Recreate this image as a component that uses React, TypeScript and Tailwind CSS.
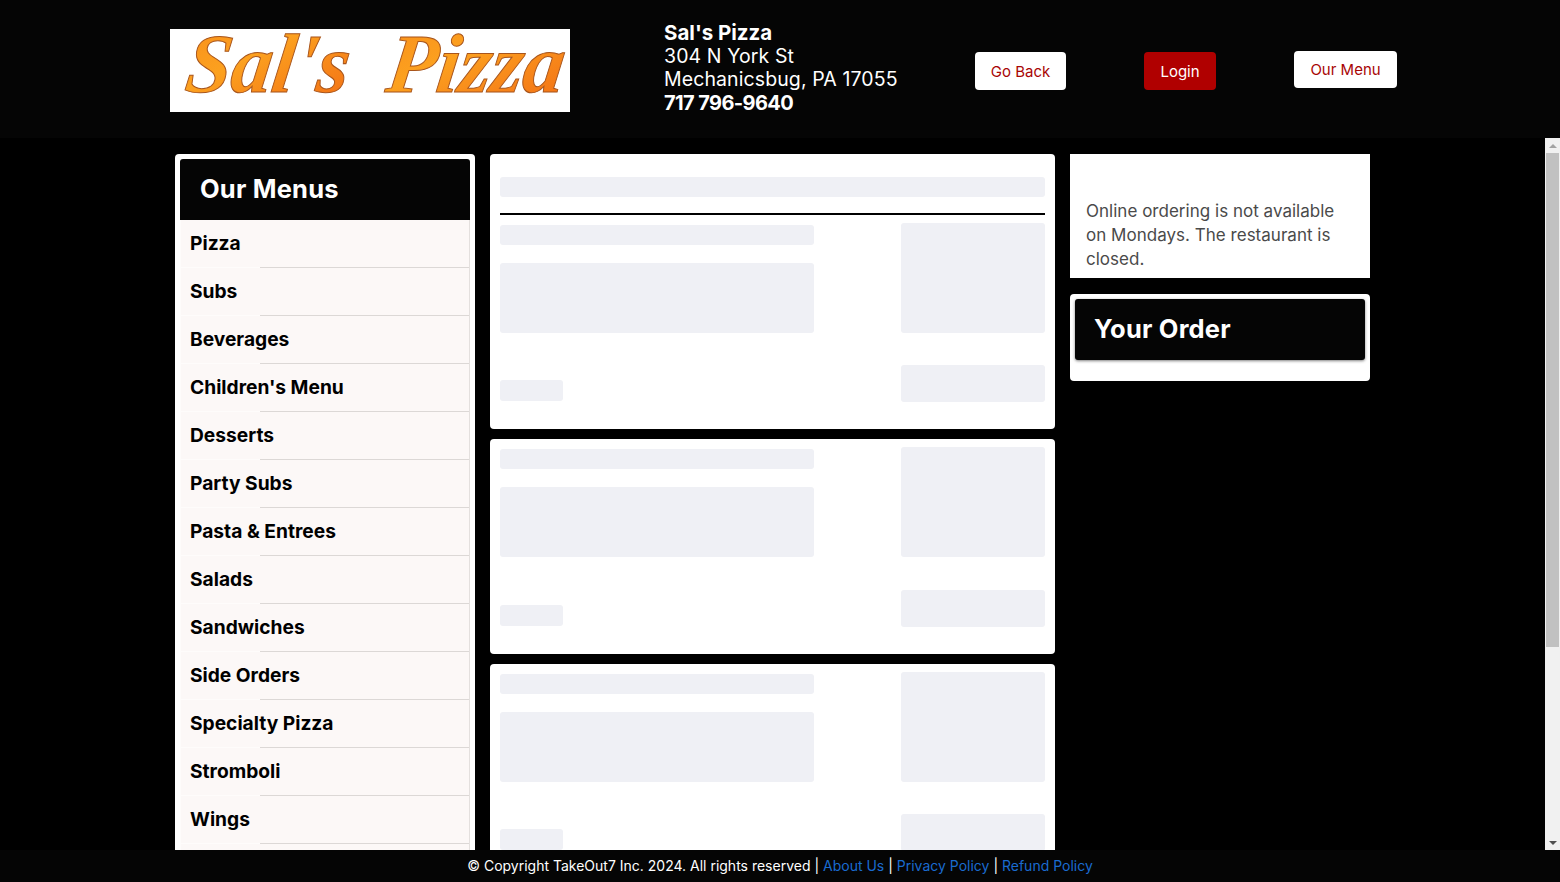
import React from 'react';

const menus = [
  'Pizza',
  'Subs',
  'Beverages',
  "Children's Menu",
  'Desserts',
  'Party Subs',
  'Pasta & Entrees',
  'Salads',
  'Sandwiches',
  'Side Orders',
  'Specialty Pizza',
  'Stromboli',
  'Wings',
];

const Logo = () => (
  <svg viewBox="0 0 400 83" className="block w-[400px] h-[83px] bg-white">
    <defs>
      <linearGradient id="logoFill" x1="0" y1="0" x2="1" y2="1">
        <stop offset="0" stopColor="#f98f1c" />
        <stop offset="0.4" stopColor="#fca11f" />
        <stop offset="0.7" stopColor="#f7861a" />
        <stop offset="1" stopColor="#f26f14" />
      </linearGradient>
    </defs>
    <g transform="skewX(-8)">
      <text
        x="22"
        y="63"
        textLength="163"
        lengthAdjust="spacingAndGlyphs"
        fontFamily="'Liberation Serif', serif"
        fontStyle="italic"
        fontWeight="700"
        fontSize="84"
        fill="url(#logoFill)"
        stroke="#a8551c"
        strokeWidth="1"
      >
        Sal's
      </text>
      <text
        x="223"
        y="63"
        textLength="177"
        lengthAdjust="spacingAndGlyphs"
        fontFamily="'Liberation Serif', serif"
        fontStyle="italic"
        fontWeight="700"
        fontSize="84"
        fill="url(#logoFill)"
        stroke="#a8551c"
        strokeWidth="1"
      >
        Pizza
      </text>
    </g>
  </svg>
);

const Bone = ({ className }: { className: string }) => (
  <div className={`bg-[#eff0f5] rounded-[3px] ${className}`} />
);

const SkeletonCard = ({ first, roomy }: { first?: boolean; roomy?: boolean }) => (
  <div className="bg-white rounded-[4px] px-[10px] pt-[8px] pb-[27px]">
    {first && (
      <div className="pt-[15px] mb-[8px]">
        <Bone className="h-[20px] w-full" />
        <div className="h-[2px] bg-black mt-[16px]" />
      </div>
    )}
    <div className="flex justify-between">
      <div className="w-[314px] pt-[2px]">
        <Bone className="h-[20px]" />
        <Bone className="h-[70px] mt-[18px]" />
        <Bone className={`h-[21px] w-[63px] ${roomy ? 'mt-[48px]' : 'mt-[47px]'}`} />
      </div>
      <div className="w-[144px]">
        <Bone className="h-[110px]" />
        <Bone className={`h-[37px] ${roomy ? 'mt-[33px]' : 'mt-[32px]'}`} />
      </div>
    </div>
  </div>
);

// the page's scrollbar, as it stood when the page was photographed
const ScrollBar = () => (
  <div className="absolute top-0 right-0 bottom-0 w-[15px] bg-[#f1f1f1] flex flex-col items-center">
    <div className="h-[15px] w-full shrink-0 flex items-center justify-center">
      <div className="w-0 h-0 border-x-[4px] border-x-transparent border-b-[4px] border-b-[#a3a3a3]" />
    </div>
    <div className="h-[494px] w-[13px] bg-[#c1c1c1]" />
    <div className="mt-auto h-[15px] w-full shrink-0 flex items-center justify-center">
      <div className="w-0 h-0 border-x-[4px] border-x-transparent border-t-[4px] border-t-[#505050]" />
    </div>
  </div>
);

export default function App() {
  return (
    <div className="h-[882px] overflow-hidden bg-black flex flex-col font-['Inter','Liberation_Sans',sans-serif]">
      <header className="h-[138px] shrink-0 bg-[#050505] flex items-start pl-[170px] text-white">
        <div className="mt-[29px]">
          <Logo />
        </div>
        <div className="ml-[94px] mt-[21px] w-[311px] text-[19.5px] leading-[23.5px] tracking-[0.1px]">
          <div className="font-bold text-[20.5px] tracking-normal">Sal's Pizza</div>
          <div>304 N York St</div>
          <div>Mechanicsbug, PA 17055</div>
          <div className="font-bold text-[20px] tracking-[-0.6px]">717 796-9640</div>
        </div>
        <button className="mt-[52px] pt-[2px] h-[38px] w-[91px] bg-white text-[#a80505] text-[15px] rounded-[4px]">Go Back</button>
        <button className="ml-[78px] mt-[52px] pt-[2px] h-[38px] w-[72px] bg-[#b00000] text-white text-[15px] rounded-[4px]">Login</button>
        <button className="ml-[78px] mt-[51px] pt-[2px] h-[37px] w-[103px] bg-white text-[#a80505] text-[15px] rounded-[4px]">Our Menu</button>
      </header>

      <div className="relative flex-1 min-h-0">
        <main className="h-full overflow-hidden bg-black pl-[175px] pt-[16px]">
          <div className="flex gap-[15px] items-start">
            <aside className="w-[300px] shrink-0 bg-white rounded-[4px] p-[5px] pb-0">
              <h2 className="h-[61px] bg-[#050505] rounded-t-[3px] pl-[20px] flex items-center text-white text-[25.5px] tracking-[0.2px] font-bold">Our Menus</h2>
              <ul className="bg-[#fcf8f7] border-l border-l-[#fefcfb] border-r border-r-[#e4e0de] pb-[20px]">
                {menus.map((name) => (
                  <li key={name} className="relative h-[48px] pl-[9px] pb-[2px] flex items-center text-black text-[19.2px] font-bold">
                    {name}
                    <span className="absolute left-0 w-[79px] bottom-0 h-px bg-[#fefcfb]" />
                    <span className="absolute left-[79px] right-0 bottom-0 h-px bg-[#dcd8d6]" />
                  </li>
                ))}
              </ul>
            </aside>

            <section className="w-[565px] shrink-0 flex flex-col gap-[10px]">
              <SkeletonCard first />
              <SkeletonCard roomy />
              <SkeletonCard />
            </section>

            <div className="w-[300px] shrink-0 flex flex-col gap-[16px]">
              <div className="h-[124px] bg-white px-[16px] pt-[45px] text-[#4a4a4a] text-[17px] leading-[24px] tracking-[0.02px]">
                Online ordering is not available on Mondays. The restaurant is closed.
              </div>
              <div className="h-[87px] bg-white rounded-[4px] p-[5px]">
                <h2 className="h-[61px] bg-[#050505] rounded-[3px] pl-[19px] flex items-center text-white text-[25.5px] tracking-[0.2px] font-bold shadow-[0_1px_3px_rgba(0,0,0,0.5)]">Your Order</h2>
              </div>
            </div>
          </div>
        </main>
        <ScrollBar />
      </div>

      <footer className="h-[32px] shrink-0 pb-[2px] bg-[#050505] flex items-center justify-center text-white text-[14px]">
        <span>© Copyright TakeOut7 Inc. 2024. All rights reserved |&nbsp;</span>
        <a className="text-[#1a6bd0]">About Us</a>
        <span>&nbsp;|&nbsp;</span>
        <a className="text-[#1a6bd0]">Privacy Policy</a>
        <span>&nbsp;|&nbsp;</span>
        <a className="text-[#1a6bd0]">Refund Policy</a>
      </footer>
    </div>
  );
}
